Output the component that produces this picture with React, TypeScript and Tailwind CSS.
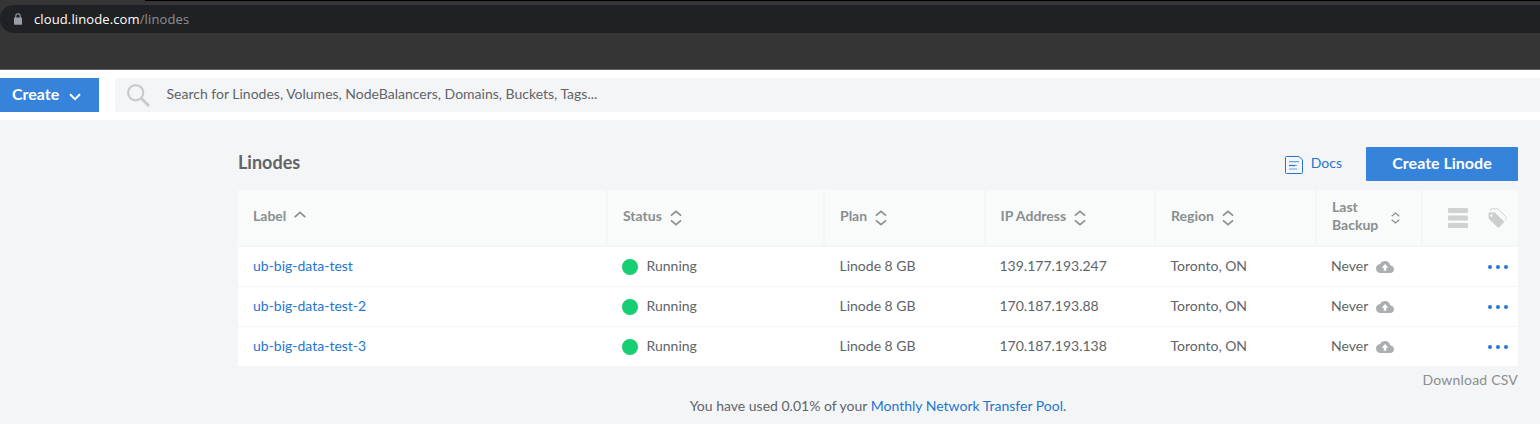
import type { ReactNode } from "react";

const COLS = "grid grid-cols-[370px_217px_161px_170px_161px_106px_95px]";

const LINODES = [
  { label: "ub-big-data-test", ip: "139.177.193.247" },
  { label: "ub-big-data-test-2", ip: "170.187.193.88" },
  { label: "ub-big-data-test-3", ip: "170.187.193.138" },
];

function SortIcon({ small = false }: { small?: boolean }) {
  return (
    <svg
      className={small ? "mt-[3px] h-[12px] w-[9px] shrink-0" : "mt-[3px] h-[16px] w-[12px] shrink-0"}
      viewBox="0 0 13 17"
      preserveAspectRatio="none"
      fill="none"
      stroke="#888f91"
      strokeWidth="1.8"
    >
      <path d="M1 6 6.5 1.4 12 6M1 11l5.5 4.6 5.5-4.6" />
    </svg>
  );
}

function HeaderCell({ children }: { children: ReactNode }) {
  return (
    <div className="flex items-center border-r-2 border-[#f4f5f6] pb-[3px] pl-[15px] font-bold leading-[18px] text-[#888f91]">
      {children}
    </div>
  );
}

function BrowserBar() {
  return (
    <div className="flex h-[70px] flex-col border-b border-[#606060] bg-[#353535]">
      <div className="ml-[145px] h-px bg-black" />
      <div className="mt-[4px] flex h-[28px] items-center rounded-l-full bg-[#202124] pl-[14px]">
        <svg className="h-[12px] w-[8px]" viewBox="0 0 8 12">
          <rect y="4.4" width="8" height="7.4" rx="0.8" fill="#9aa0a6" />
          <path d="M1.8 5V3a2.2 2.2 0 0 1 4.4 0v2" fill="none" stroke="#9aa0a6" strokeWidth="1.1" />
        </svg>
        <div className="ml-[12px] font-['Open_Sans',sans-serif] text-[13px] leading-[18px] tracking-[0.12px] text-[#8d9196]">
          <span className="text-white">cloud.linode.com</span>/linodes
        </div>
      </div>
    </div>
  );
}

function TopMenu() {
  return (
    <div className="flex h-[50px] items-center bg-white">
      <button className="flex h-[34px] w-[99px] items-center bg-[#3683dc] pl-[12px] text-left text-[16px] font-bold text-white">
        <span className="w-[57px] pb-[2px]">Create</span>
        <svg className="mt-[3px] h-[8px] w-[12px]" viewBox="0 0 12 8" fill="none" stroke="white" strokeWidth="2">
          <path d="M1 1.2 6 6.2 11 1.2" />
        </svg>
      </button>
      <div className="ml-[16px] flex h-[34px] flex-1 items-center rounded-l-[2px] bg-[#f4f5f6] pl-[12px]">
        <svg className="h-[23px] w-[23px]" viewBox="0 0 23 23" fill="none" stroke="#c9cacb">
          <circle cx="8.7" cy="8.7" r="7.6" strokeWidth="2.2" />
          <path d="m14.5 14.5 7.5 7.5" strokeWidth="2.8" />
        </svg>
        <span className="ml-[16.5px] pb-[2px] text-[14px] text-[#606469]">
          Search for Linodes, Volumes, NodeBalancers, Domains, Buckets, Tags...
        </span>
      </div>
    </div>
  );
}

function TableHeader() {
  return (
    <div className={`${COLS} h-[57px] border-b-2 border-[#f4f5f6] bg-[#f9fafa]`}>
      <HeaderCell>
        <span>Label</span>
        <svg className="mb-[3px] ml-[8px] h-[7px] w-[12px]" viewBox="0 0 12 7" fill="none" stroke="#888f91" strokeWidth="1.7">
          <path d="M.7 6.1 6 1.3l5.3 4.8" />
        </svg>
      </HeaderCell>
      <HeaderCell>
        <span className="mr-[8px]">Status</span>
        <SortIcon />
      </HeaderCell>
      <HeaderCell>
        <span className="mr-[8px]">Plan</span>
        <SortIcon />
      </HeaderCell>
      <HeaderCell>
        <span className="-ml-[0.5px] mr-[7.5px]">IP Address</span>
        <SortIcon />
      </HeaderCell>
      <HeaderCell>
        <span className="mr-[8px]">Region</span>
        <SortIcon />
      </HeaderCell>
      <HeaderCell>
        <span className="mr-[12px] w-[47px]">Last Backup</span>
        <SortIcon small />
      </HeaderCell>
      <div className="flex items-center justify-end pr-[11px]">
        <svg className="mr-[20px] h-[20px] w-[20px]" viewBox="0 0 20 20" fill="#d0d1d2">
          <rect width="20" height="5" rx="1" />
          <rect y="7.5" width="20" height="5" rx="1" />
          <rect y="15" width="20" height="5" rx="1" />
        </svg>
        <svg className="h-[20px] w-[19px]" viewBox="0 0 19 20">
          <path
            d="M.9 4.6h5.5c.5 0 .8.1 1.1.4l8.1 8.2c.5.5.5 1 0 1.5l-4.5 4.6c-.5.5-1 .5-1.5 0L1 11.1c-.3-.3-.4-.6-.4-1V5c0-.3.1-.4.3-.4Zm2.5 1.7a1.3 1.3 0 1 0 0 2.6 1.3 1.3 0 0 0 0-2.6Z"
            fill="#cccdce"
            fillRule="evenodd"
          />
          <path
            d="M2.5 3.2V2.300C2.500 1.300 3 .8 4 .8h5.400c.5 0 .8.1 1.100.4l7.500 7.900c.5.5.5 1 0 1.500l-1.700 1.900"
            fill="none"
            stroke="#cccdce"
            strokeWidth=".9"
          />
        </svg>
      </div>
    </div>
  );
}

function LinodeRow({ label, ip }: { label: string; ip: string }) {
  return (
    <div className={`${COLS} h-[40px] items-center border-b border-[#f4f5f6] bg-white pb-px last:h-[39px] last:border-b-0`}>
      <a className="pl-[15px] text-[#2575d0]">{label}</a>
      <div className="flex items-center pl-[14px]">
        <span className="mr-[8.5px] mt-px h-[16px] w-[16px] rounded-full bg-[#17cf73]" />
        Running
      </div>
      <div className="pl-[14.5px]">Linode 8 GB</div>
      <div className="pl-[13.5px]">{ip}</div>
      <div className="pl-[14.5px]">Toronto, ON</div>
      <div className="flex items-center pl-[14px]">
        Never
        <svg className="ml-[8px] mt-[2px] h-[12px] w-[18px]" viewBox="0 4 24 16" preserveAspectRatio="none" fill="#abadaf">
          <path d="M19.35 10.04C18.67 6.59 15.64 4 12 4 9.11 4 6.6 5.64 5.35 8.04 2.34 8.36 0 10.91 0 14c0 3.31 2.69 6 6 6h13c2.76 0 5-2.24 5-5 0-2.64-2.05-4.78-4.65-4.96Z" />
          <path d="m12 8 4.500 5h-2.800v4h-3.400v-4H7.500Z" fill="white" />
        </svg>
      </div>
      <div className="flex justify-end gap-[4px] pr-[10px] pt-[2px]">
        <span className="h-[4px] w-[4px] rounded-full bg-[#2575d0]" />
        <span className="h-[4px] w-[4px] rounded-full bg-[#2575d0]" />
        <span className="h-[4px] w-[4px] rounded-full bg-[#2575d0]" />
      </div>
    </div>
  );
}

export default function App() {
  return (
    <div className="h-[424px] w-[1540px] overflow-hidden bg-[#f4f5f6] font-[Lato,sans-serif] text-[14px] leading-[18px] text-[#606469]">
      <BrowserBar />
      <TopMenu />
      <main className="ml-[238px] w-[1280px] pt-[27px]">
        <div className="flex h-[34px] items-center">
          <h1 className="flex-1 pb-[4px] text-[18px] font-bold leading-[22px]">Linodes</h1>
          <a className="mr-[24px] flex items-center text-[#2575d0]">
            <svg className="mr-[8px] mt-px h-[18px] w-[18px]" viewBox="0 0 18 18" fill="none" stroke="#2575d0">
              <path d="M1.5.5h12.3l3.7 3.2v12.8a1 1 0 0 1-1 1h-15a1 1 0 0 1-1-1v-15a1 1 0 0 1 1-1Z" />
              <path d="M4 9.5h6" strokeWidth="1.2" />
              <path d="M4 5.700h10M10 9.500h2M4 13h8" strokeWidth="1.2" opacity=".65" />
            </svg>
            <span className="pb-[2px]">Docs</span>
          </a>
          <button className="h-[34px] w-[152px] rounded-[1px] bg-[#3683dc] pb-[2px] text-[16px] font-bold text-white">
            Create Linode
          </button>
        </div>
        <div className="mt-[9px]">
          <TableHeader />
          <div>
            {LINODES.map((linode) => (
              <LinodeRow key={linode.label} {...linode} />
            ))}
          </div>
        </div>
        <div className="mt-[5px] text-right tracking-[0.2px] text-[#888f91]">Download CSV</div>
        <div className="mt-[8px] text-center">
          You have used 0.01% of your <a className="text-[#2575d0]">Monthly Network Transfer Pool</a>.
        </div>
      </main>
    </div>
  );
}
